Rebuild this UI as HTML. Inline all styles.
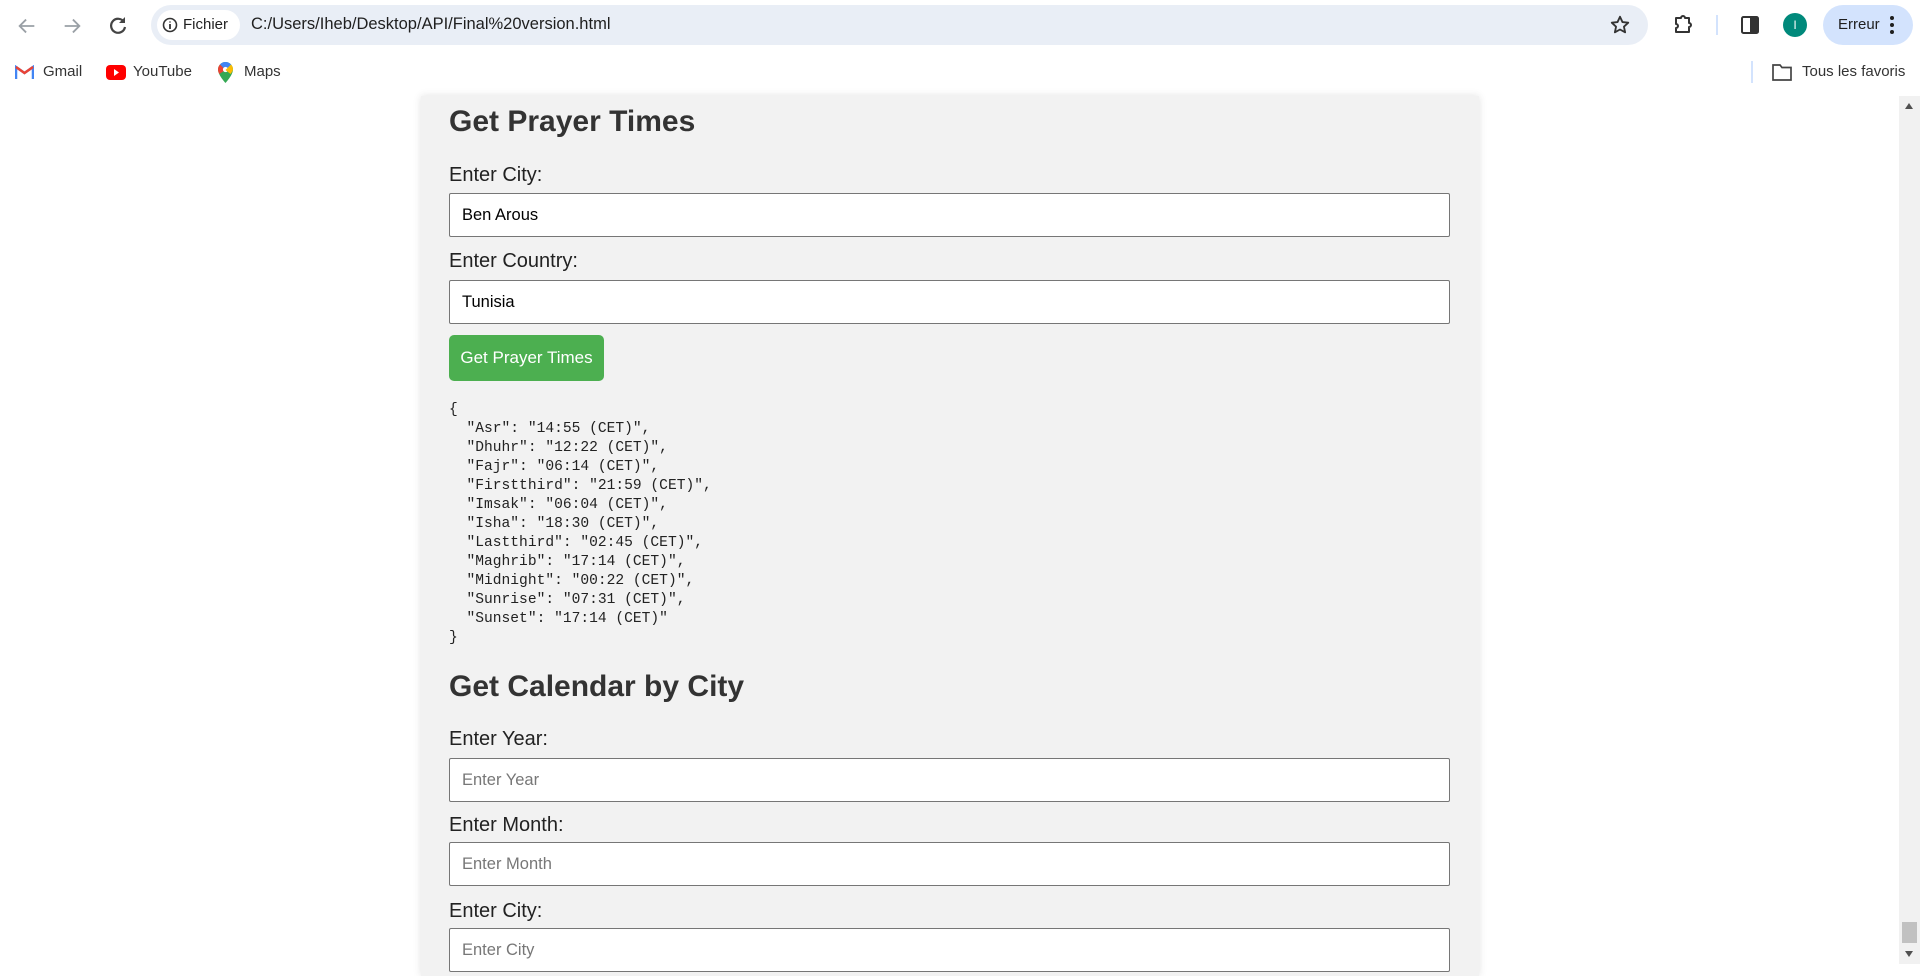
<!DOCTYPE html>
<html><head><meta charset="utf-8"><style>
*{box-sizing:border-box;margin:0;padding:0}
body{width:1920px;height:964px;overflow:hidden;background:#fff;font-family:"Liberation Sans",Arial,sans-serif;position:relative}
.abs{position:absolute}
.top{position:absolute;left:0;top:0;width:1920px;height:96px;background:#fff}
.omni{left:151px;top:5px;width:1497px;height:40px;background:#e9eef6;border-radius:20px}
.chip{left:157px;top:10px;width:83px;height:30px;background:#fff;border-radius:15px;font-size:15px;color:#1f1f1f;line-height:30px;padding-left:26px}
.url{left:251px;top:15px;font-size:16.5px;color:#1f1f1f}
.bm{font-size:15px;color:#333;top:63px}
.panel{left:421px;top:96px;width:1058px;height:880px;background:#f2f2f2;box-shadow:0 0 8px rgba(0,0,0,.12)}
h2{position:absolute;left:449px;font-size:30px;font-weight:bold;color:#333}
.lab{position:absolute;left:449px;font-size:20px;color:#222}
.inp{position:absolute;left:449px;width:1001px;height:44px;background:#fff;border:1px solid #767676;border-radius:2px;font-size:16.5px;line-height:42px;padding-left:12px;color:#000}
.ph{color:#777}
.btn{left:449px;top:335px;width:155px;height:46px;background:#4caf50;border-radius:5px;color:#fff;font-size:17px;line-height:46px;text-align:center}
pre{position:absolute;left:449px;top:401px;font-family:"Liberation Mono",monospace;font-size:14.6px;line-height:19px;color:#222}
</style></head><body>
<div class="top"></div>
<svg class="abs" style="left:16px;top:15px" width="22" height="22" viewBox="0 0 24 24"><path d="M20 12H5M11 5l-7 7 7 7" stroke="#9aa0a6" stroke-width="2" fill="none"/></svg>
<svg class="abs" style="left:61px;top:15px" width="22" height="22" viewBox="0 0 24 24"><path d="M4 12h15M13 5l7 7-7 7" stroke="#9aa0a6" stroke-width="2" fill="none"/></svg>
<svg class="abs" style="left:106px;top:14px" width="24" height="24" viewBox="0 0 24 24"><path d="M18 8A7 7 0 1 0 19 13" stroke="#444" stroke-width="2.2" fill="none"/><path d="M19 3v6h-6z" fill="#444"/></svg>
<div class="abs omni"></div>
<div class="abs chip">Fichier</div>
<svg class="abs" style="left:162px;top:17px" width="16" height="16" viewBox="0 0 16 16"><circle cx="8" cy="8" r="6.5" stroke="#333" stroke-width="1.6" fill="none"/><path d="M8 7v5M8 4.5v1" stroke="#333" stroke-width="1.8"/></svg>
<div class="abs url">C:/Users/Iheb/Desktop/API/Final%20version.html</div>
<svg class="abs" style="left:1609px;top:14px" width="22" height="22" viewBox="0 0 24 24"><path d="M12 3l2.7 5.8 6.3.7-4.7 4.3 1.3 6.2L12 16.9 6.4 20l1.3-6.2L3 9.5l6.3-.7z" stroke="#333" stroke-width="2" fill="none" stroke-linejoin="round"/></svg>
<svg class="abs" style="left:1671px;top:13px" width="24" height="24" viewBox="0 0 24 24"><path d="M5 5h5a2 2 0 0 1 4 0h4v5a2 2 0 0 1 0 4v5H5v-4a2 2 0 0 0 0-4z" stroke="#333" stroke-width="2" fill="none" stroke-linejoin="round"/></svg>
<div class="abs" style="left:1716px;top:15px;width:2px;height:20px;background:#d3e3fd"></div>
<svg class="abs" style="left:1740px;top:15px" width="20" height="20" viewBox="0 0 20 20"><rect x="2" y="2" width="16" height="16" rx="1.5" stroke="#333" stroke-width="2" fill="none"/><rect x="10" y="2" width="8" height="16" fill="#333"/></svg>
<div class="abs" style="left:1783px;top:13px;width:24px;height:24px;border-radius:50%;background:#00897b;color:#fff;font-size:12px;text-align:center;line-height:24px">I</div>
<div class="abs" style="left:1823px;top:5px;width:90px;height:40px;border-radius:20px;background:#d3e3fd;font-size:15px;color:#1f1f1f;line-height:40px;padding-left:15px">Erreur</div>
<svg class="abs" style="left:1889px;top:15px" width="6" height="20"><circle cx="3" cy="3" r="2" fill="#1f1f1f"/><circle cx="3" cy="10" r="2" fill="#1f1f1f"/><circle cx="3" cy="17" r="2" fill="#1f1f1f"/></svg>
<svg class="abs" style="left:15px;top:65px" width="19" height="14" viewBox="0 0 19 14"><path d="M1 14V2l8.5 6L18 2v12" stroke="#4285f4" stroke-width="2.5" fill="none"/><path d="M1 2l8.5 6L18 2" stroke="#ea4335" stroke-width="2.5" fill="none"/></svg>
<div class="abs bm" style="left:43px">Gmail</div>
<svg class="abs" style="left:106px;top:65px" width="20" height="15"><rect width="20" height="15" rx="4" fill="#f00"/><path d="M8 4l5 3.5L8 11z" fill="#fff"/></svg>
<div class="abs bm" style="left:133px">YouTube</div>
<svg class="abs" style="left:218px;top:62px" width="15" height="21" viewBox="0 0 15 21"><path d="M7.5 0A7.5 7.5 0 0 0 0 7.5C0 13 7.5 21 7.5 21S15 13 15 7.5A7.5 7.5 0 0 0 7.5 0z" fill="#34a853"/><path d="M7.5 0A7.5 7.5 0 0 0 2 2.5l5.5 5.5L13 2.5A7.5 7.5 0 0 0 7.5 0z" fill="#4285f4"/><path d="M2 2.5A7.5 7.5 0 0 0 0 7.5C0 9 .5 10.5 1.3 12L7.5 8z" fill="#ea4335"/><circle cx="7.5" cy="7.5" r="2.6" fill="#fff"/><path d="M13 2.5l-5.5 5.5 5 4c1.5-2 2.5-3.5 2.5-4.5A7.5 7.5 0 0 0 13 2.5z" fill="#fbbc04"/></svg>
<div class="abs bm" style="left:244px">Maps</div>
<div class="abs" style="left:1751px;top:61px;width:2px;height:22px;background:#d3e3fd"></div>
<svg class="abs" style="left:1772px;top:64px" width="20" height="17" viewBox="0 0 20 17"><path d="M1 1h7l2 2.5h9V16H1z" stroke="#444" stroke-width="1.7" fill="none"/></svg>
<div class="abs bm" style="left:1802px">Tous les favoris</div>
<div class="abs panel"></div>
<h2 style="top:105px">Get Prayer Times</h2>
<div class="lab" style="top:164px">Enter City:</div>
<div class="inp" style="top:193px">Ben Arous</div>
<div class="lab" style="top:250px">Enter Country:</div>
<div class="inp" style="top:280px">Tunisia</div>
<div class="abs btn">Get Prayer Times</div>
<pre>{
  "Asr": "14:55 (CET)",
  "Dhuhr": "12:22 (CET)",
  "Fajr": "06:14 (CET)",
  "Firstthird": "21:59 (CET)",
  "Imsak": "06:04 (CET)",
  "Isha": "18:30 (CET)",
  "Lastthird": "02:45 (CET)",
  "Maghrib": "17:14 (CET)",
  "Midnight": "00:22 (CET)",
  "Sunrise": "07:31 (CET)",
  "Sunset": "17:14 (CET)"
}</pre>
<h2 style="top:670px">Get Calendar by City</h2>
<div class="lab" style="top:728px">Enter Year:</div>
<div class="inp ph" style="top:758px">Enter Year</div>
<div class="lab" style="top:814px">Enter Month:</div>
<div class="inp ph" style="top:842px">Enter Month</div>
<div class="lab" style="top:900px">Enter City:</div>
<div class="inp ph" style="top:928px">Enter City</div>
<div class="abs" style="left:1899px;top:96px;width:21px;height:868px;background:#f1f1f1"></div>
<svg class="abs" style="left:1904px;top:102px" width="10" height="8"><path d="M5 1L9 7H1z" fill="#505050"/></svg>
<svg class="abs" style="left:1904px;top:950px" width="10" height="8"><path d="M5 7L9 1H1z" fill="#505050"/></svg>
<div class="abs" style="left:1902px;top:922px;width:15px;height:21px;background:#c1c1c1"></div>
</body></html>
